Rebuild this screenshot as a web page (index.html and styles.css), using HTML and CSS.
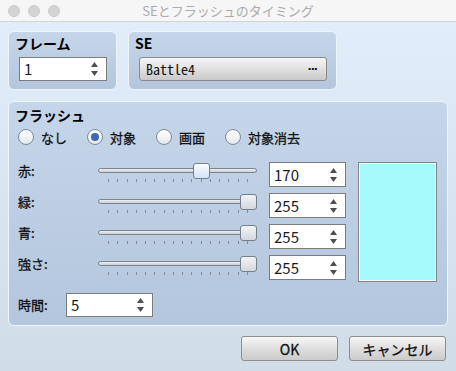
FILE: index.html
```html
<!doctype html>
<html lang="ja">
  <head>
    <meta charset="UTF-8" />
    <title>SEとフラッシュのタイミング</title>
    <link rel="stylesheet" href="styles.css">
  </head>
  <body>
    <div class="titlebar">
      <div class="lights">
        <span class="light"></span>
        <span class="light"></span>
        <span class="light"></span>
      </div>
      <div class="title">SEとフラッシュのタイミング</div>
    </div>

    <div class="main">
      <div class="top">
        <div class="group frame">
          <div class="group-title">フレーム</div>
          <div class="spin spin-frame">
            <span class="spin-value">1</span>
            <svg class="arrows" width="7" height="14" viewBox="0 0 7 14"><polygon points="3.5,0 7,5 0,5" /><polygon points="0,9 7,9 3.5,14" /></svg>
          </div>
        </div>
        <div class="group se">
          <div class="group-title">SE</div>
          <button class="picker">
            <span class="picker-text">Battle4</span>
            <span class="dots">···</span>
          </button>
        </div>
      </div>

      <div class="group flash">
        <div class="group-title">フラッシュ</div>
        <div class="radios">
          <label class="radio"><span class="circle"></span>なし</label>
          <label class="radio"><span class="circle checked"></span>対象</label>
          <label class="radio"><span class="circle"></span>画面</label>
          <label class="radio"><span class="circle"></span>対象消去</label>
        </div>

        <div class="color-grid">
          <div class="row-label">赤:</div>
          <div class="slider">
            <div class="track"></div>
            <div class="thumb active" style="left: 94.7px"></div>
            <div class="ticks"><i></i><i></i><i></i><i></i><i></i><i></i><i></i><i></i><i></i><i></i><i></i><i></i><i></i><i></i><i></i><i></i></div>
          </div>
          <div class="spin">
            <span class="spin-value">170</span>
            <svg class="arrows" width="7" height="14" viewBox="0 0 7 14"><polygon points="3.5,0 7,5 0,5" /><polygon points="0,9 7,9 3.5,14" /></svg>
          </div>
          <div class="preview"></div>

          <div class="row-label">緑:</div>
          <div class="slider">
            <div class="track"></div>
            <div class="thumb" style="left: 142px"></div>
            <div class="ticks"><i></i><i></i><i></i><i></i><i></i><i></i><i></i><i></i><i></i><i></i><i></i><i></i><i></i><i></i><i></i><i></i></div>
          </div>
          <div class="spin">
            <span class="spin-value">255</span>
            <svg class="arrows" width="7" height="14" viewBox="0 0 7 14"><polygon points="3.5,0 7,5 0,5" /><polygon points="0,9 7,9 3.5,14" /></svg>
          </div>

          <div class="row-label">青:</div>
          <div class="slider">
            <div class="track"></div>
            <div class="thumb" style="left: 142px"></div>
            <div class="ticks"><i></i><i></i><i></i><i></i><i></i><i></i><i></i><i></i><i></i><i></i><i></i><i></i><i></i><i></i><i></i><i></i></div>
          </div>
          <div class="spin">
            <span class="spin-value">255</span>
            <svg class="arrows" width="7" height="14" viewBox="0 0 7 14"><polygon points="3.5,0 7,5 0,5" /><polygon points="0,9 7,9 3.5,14" /></svg>
          </div>

          <div class="row-label">強さ:</div>
          <div class="slider">
            <div class="track"></div>
            <div class="thumb" style="left: 142px"></div>
            <div class="ticks"><i></i><i></i><i></i><i></i><i></i><i></i><i></i><i></i><i></i><i></i><i></i><i></i><i></i><i></i><i></i><i></i></div>
          </div>
          <div class="spin">
            <span class="spin-value">255</span>
            <svg class="arrows" width="7" height="14" viewBox="0 0 7 14"><polygon points="3.5,0 7,5 0,5" /><polygon points="0,9 7,9 3.5,14" /></svg>
          </div>
        </div>

        <div class="time-row">
          <div class="row-label time-label">時間:</div>
          <div class="spin spin-time">
            <span class="spin-value">5</span>
            <svg class="arrows" width="7" height="14" viewBox="0 0 7 14"><polygon points="3.5,0 7,5 0,5" /><polygon points="0,9 7,9 3.5,14" /></svg>
          </div>
        </div>
      </div>

      <div class="buttons">
        <button class="btn">OK</button>
        <button class="btn">キャンセル</button>
      </div>
    </div>
  </body>
</html>
```

FILE: styles.css
```css
* {
  box-sizing: border-box;
}

body {
  margin: 0;
  width: 456px;
  height: 371px;
  overflow: hidden;
  background: linear-gradient(#e2eefb, #d1dce9);
  font-family: "Noto Sans CJK JP", "Noto Sans", sans-serif;
  color: #111;
}

/* window chrome */
.titlebar {
  position: relative;
  height: 22px;
  background: #f6f6f6;
  border-bottom: 1px solid #d3d3d3;
}

.lights {
  display: flex;
  gap: 8px;
  padding: 5px 0 0 8px;
}

.light {
  width: 12px;
  height: 12px;
  border-radius: 50%;
  background: #d4d4d4;
  border: 1px solid #cbcbcb;
}

.title {
  position: absolute;
  top: 0;
  left: 0;
  right: 0;
  text-align: center;
  line-height: 21px;
  font-size: 13px;
  color: #ababab;
}

.main {
  padding: 9px 8px 0 8px;
}

.top {
  display: flex;
  gap: 11px;
}

.group {
  background: linear-gradient(#c5d6ea, #b4c6dd);
  border: 1px solid #eef4fb;
  border-radius: 6px;
}

.group-title {
  font-size: 14px;
  font-weight: bold;
  line-height: 18px;
  color: #000;
}

.frame {
  width: 109px;
  height: 59px;
  padding: 2px 0 0 6px;
}

.se {
  width: 209px;
  height: 59px;
  padding: 2px 0 0 6px;
}

/* spin box */
.spin {
  position: relative;
  display: flex;
  align-items: center;
  height: 25px;
  background: #fff;
  border: 1px solid #7c7c7c;
  padding-left: 4px;
  font-size: 15px;
  color: #1a1a1a;
}

.spin-value {
  flex: 1;
  line-height: 20px;
}

.arrows {
  fill: #4e4e4e;
  margin-right: 8px;
}

.spin-frame {
  width: 88px;
  height: 24px;
  margin: 5px 0 0 4px;
}

/* file picker */
.picker {
  display: flex;
  align-items: center;
  width: 188px;
  height: 24px;
  margin: 5px 0 0 4px;
  padding: 0 6px;
  border: 1px solid #8b8b8b;
  border-radius: 3px;
  background: linear-gradient(#f6f6f6, #dedede 55%, #c9c9c9);
  font-family: "Noto Sans Mono CJK JP", "DejaVu Sans Mono", monospace;
  font-size: 14px;
  color: #111;
}

.picker-text {
  flex: 1;
  text-align: left;
}

.dots {
  font-family: "DejaVu Sans", sans-serif;
  font-size: 11px;
  font-weight: bold;
  letter-spacing: -1px;
  margin-right: 3px;
}

/* flash */
.flash {
  margin-top: 11px;
  height: 225px;
  padding: 4px 10px 0 6px;
}

.radios {
  display: flex;
  gap: 20px;
  margin: 5px 0 0 3px;
}

.radio {
  display: flex;
  align-items: center;
  gap: 7px;
  height: 16px;
  font-size: 13px;
  -webkit-text-stroke: 0.3px #111;
}

.circle {
  position: relative;
  width: 16px;
  height: 16px;
  border-radius: 50%;
  border: 1px solid #7f8a96;
  background: linear-gradient(#ffffff, #e4e8ec);
}

.circle.checked::after {
  content: "";
  position: absolute;
  left: 3px;
  top: 3px;
  width: 8px;
  height: 8px;
  border-radius: 50%;
  background: #3c68b1;
}

.color-grid {
  display: grid;
  grid-template-columns: 68px 159px 77px 79px;
  grid-auto-rows: 25px;
  column-gap: 12px;
  row-gap: 6px;
  margin: 17px 0 0 3px;
}

.row-label {
  font-size: 13px;
  line-height: 18px;
  -webkit-text-stroke: 0.3px #111;
}

.slider {
  position: relative;
}

.track {
  position: absolute;
  left: 0;
  right: 0;
  top: 6px;
  height: 5px;
  border: 1px solid #7a8390;
  border-radius: 3px;
  background: linear-gradient(#eef0f3, #c9ced5);
}

.thumb {
  position: absolute;
  top: 1px;
  width: 17px;
  height: 16px;
  border: 1px solid #76808d;
  border-radius: 3px;
  background: linear-gradient(#f3f4f6, #d3d7dc);
}

.thumb.active {
  background: linear-gradient(#fbfdff, #cfe4fa);
}

.ticks {
  position: absolute;
  left: 10px;
  right: 9px;
  top: 17px;
  display: flex;
  justify-content: space-between;
}

.ticks i {
  width: 1px;
  height: 3px;
  background: #7f8b99;
}

.preview {
  grid-column: 4;
  grid-row: 1 / span 4;
  height: 120px;
  background: #a5fbfc;
  border: 1px solid #7f858c;
  outline: 1px solid #ffffff;
  outline-offset: -2px;
}

.time-row {
  display: flex;
  align-items: center;
  margin: 13px 0 0 3px;
}

.time-label {
  width: 48px;
}

.spin-time {
  width: 87px;
  height: 24px;
}

/* dialog buttons */
.buttons {
  display: flex;
  justify-content: flex-end;
  gap: 11px;
  margin-top: 10px;
  padding-right: 2px;
}

.btn {
  width: 97px;
  height: 25px;
  border: 1px solid #8d8d8d;
  border-radius: 3px;
  background: linear-gradient(#f7f7f7, #dcdcdc 55%, #cbcbcb);
  font-family: "Noto Sans CJK JP", "Noto Sans", sans-serif;
  font-size: 14px;
  color: #111;
  padding: 0;
  -webkit-text-stroke: 0.3px #111;
}
```
